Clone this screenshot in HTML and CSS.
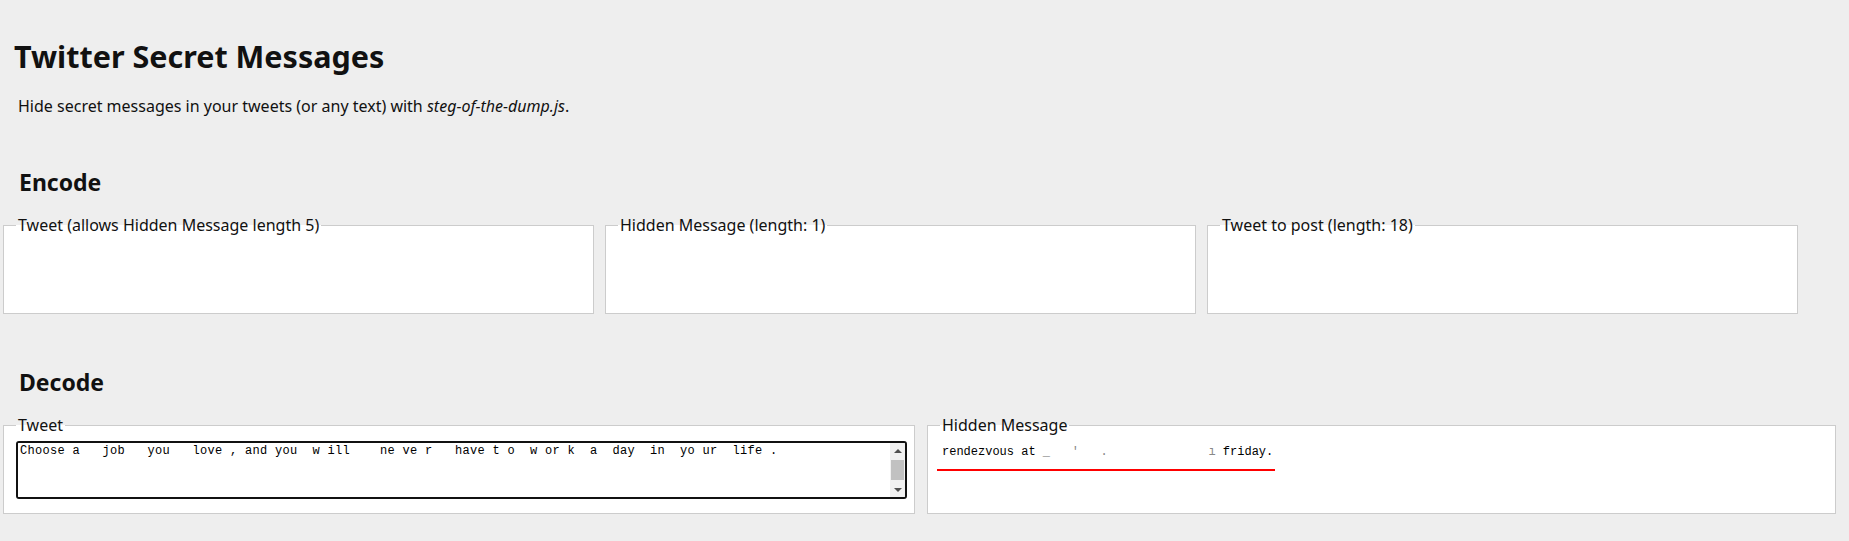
FILE: index.html
```html
<!DOCTYPE html>
<html lang="en">

<head>
    <meta charset="UTF-8">
    <title>Twitter Secret Messages</title>
    <link rel="stylesheet" href="styles.css">
</head>

<body>
    <h1>Twitter Secret Messages</h1>
    <p class="description">Hide secret messages in your tweets (or any text) with <em>steg-of-the-dump.js</em>.</p>

    <h2>Encode</h2>
    <div class="row row-encode">
        <fieldset>
            <legend>Tweet (allows Hidden Message length 5)</legend>
        </fieldset>
        <fieldset>
            <legend>Hidden Message (length: 1)</legend>
        </fieldset>
        <fieldset>
            <legend>Tweet to post (length: 18)</legend>
        </fieldset>
    </div>

    <h2>Decode</h2>
    <div class="row row-decode">
        <fieldset>
            <legend>Tweet</legend>
            <div class="tweet-box">
                <textarea class="tweet-input" spellcheck="false">Choose a   job   you   love , and you  w ill    ne ve r   have t o  w or k  a  day  in  yo ur  life .



</textarea>
                <div class="scrollbar">
                    <span class="arrow arrow-up"></span>
                    <span class="thumb"></span>
                    <span class="arrow arrow-down"></span>
                </div>
            </div>
        </fieldset>
        <fieldset>
            <legend>Hidden Message</legend>
            <div class="hidden-output">rendezvous at <span class="faint">_   '   .              ı</span> friday.</div>
        </fieldset>
    </div>
</body>

</html>
```

FILE: styles.css
```css
body {
    font-family: 'Noto Sans', sans-serif;
    margin: 0;
    padding: 0 3px;
    background: #eeeeee;
    color: #111;
}

h1 {
    margin: 0;
    padding: 36px 0 0 11px;
    font-size: 30.5px;
    line-height: 40px;
}

.description {
    margin: 20px 0 0 15px;
    font-size: 16px;
    line-height: 20px;
}

h2 {
    margin: 53px 0 0 16px;
    font-size: 23px;
    line-height: 30px;
}

.description + h2 {
    margin-top: 51px;
}

.row {
    display: grid;
    margin-top: 18px;
}

.row-encode {
    grid-template-columns: 591px 591px 591px;
    column-gap: 11px;
}

.row-decode {
    grid-template-columns: 912px 909px;
    column-gap: 12px;
}

fieldset {
    margin: 0;
    padding: 0 7px 0 12px;
    height: 99px;
    box-sizing: border-box;
    border: 1px solid #cccccc;
    background: #fff;
}

legend {
    padding: 0 2px;
    font-size: 16px;
    line-height: 20px;
}

.tweet-box {
    display: flex;
    height: 58px;
    margin-top: 6px;
    box-sizing: border-box;
    border: 2px solid #111;
    border-radius: 3px;
    overflow: hidden;
}

.tweet-input {
    flex: 1;
    padding: 2px 2px 0;
    border: none;
    outline: none;
    resize: none;
    overflow: hidden;
    font-family: 'Liberation Mono', monospace;
    font-size: 12px;
    letter-spacing: 0.3px;
    line-height: 13px;
    white-space: pre;
    color: #000;
}

.scrollbar {
    display: flex;
    flex-direction: column;
    justify-content: space-between;
    width: 15px;
    background: #f1f1f1;
}

.arrow {
    display: flex;
    align-items: center;
    justify-content: center;
    height: 15px;
}

.arrow::before {
    content: '';
    border-left: 4px solid transparent;
    border-right: 4px solid transparent;
}

.arrow-up::before {
    border-bottom: 4px solid #505050;
}

.arrow-down::before {
    border-top: 4px solid #505050;
}

.thumb {
    height: 20px;
    margin: 0 1px;
    background: #c1c1c1;
}

.hidden-output {
    display: inline-block;
    margin: 10px 0 0 -3px;
    padding: 0 2px 10px 5px;
    border-bottom: 2px solid #f00;
    font-family: 'Liberation Mono', monospace;
    font-size: 12px;
    line-height: 14px;
    white-space: pre;
    color: #000;
}

.faint {
    color: #888;
}
```
